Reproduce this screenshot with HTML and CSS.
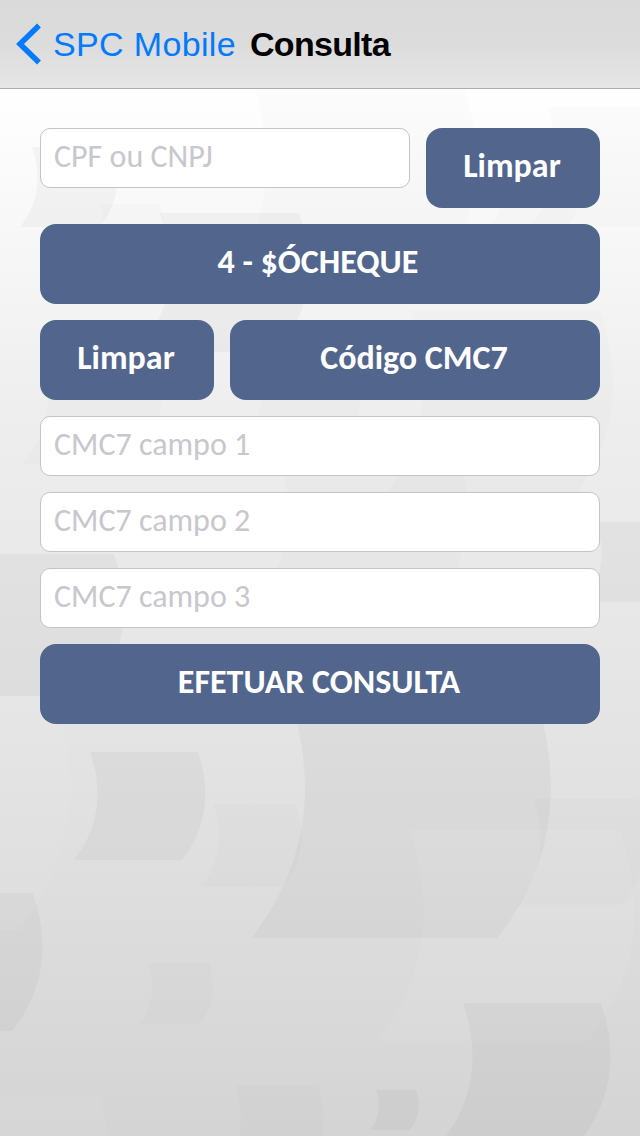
FILE: index.html
```
<!DOCTYPE html>
<html lang="pt-BR">
<head>
  <meta charset="UTF-8" />
  <meta name="viewport" content="width=device-width, initial-scale=1" />
  <title>Consulta</title>
  <link rel="stylesheet" href="styles.css">
</head>
<body>

<!-- Background pattern -->
<svg class="pattern" viewBox="0 0 640 1136" aria-hidden="true">
  <defs>
    <path id="flag" d="M0 0H100C112 35 109 70 85 100H-15C9 70 12 35 0 0Z" />
  </defs>
  <g class="dark">
    <use href="#flag" transform="translate(32 147) scale(.8)" />
    <use href="#flag" transform="translate(160 213) scale(1.39)" />
    <use href="#flag" transform="translate(-28 554) scale(1.42)" />
    <use href="#flag" transform="translate(596 522) scale(.8)" />
    <use href="#flag" transform="translate(288 692) scale(2.46)" />
    <use href="#flag" transform="translate(90 752) scale(1.08)" />
    <use href="#flag" transform="translate(-105 893) scale(1.38)" />
    <use href="#flag" transform="translate(463 1003) scale(1.38)" />
    <use href="#flag" transform="translate(376 1090) scale(.4)" />
  </g>
  <g class="faint">
    <use href="#flag" transform="translate(100 204) scale(.6)" />
    <use href="#flag" transform="translate(252 80) scale(2.1)" />
    <use href="#flag" transform="translate(547 107) scale(1.2)" />
    <use href="#flag" transform="translate(500 150) scale(.78)" />
    <use href="#flag" transform="translate(40 350) scale(1.14)" />
    <use href="#flag" transform="translate(255 350) scale(1.0)" />
    <use href="#flag" transform="translate(410 310) scale(1.9)" />
    <use href="#flag" transform="translate(275 440) scale(1.8)" />
    <use href="#flag" transform="translate(213 804) scale(.83)" />
    <use href="#flag" transform="translate(148 963) scale(.61)" />
    <use href="#flag" transform="translate(533 799) scale(1.06)" />
    <use href="#flag" transform="translate(235 1085) scale(.83)" />
  </g>
  <g class="light">
    <use href="#flag" transform="translate(-180 696) scale(2.34)" />
    <use href="#flag" transform="translate(409 830) scale(2.11)" />
    <use href="#flag" transform="translate(-51 1095) scale(1.5)" />
  </g>
</svg>

<header>
  <a class="back" href="#">
    <svg width="26" height="42" viewBox="0 0 26 42">
      <path d="M23 2.5L4 21L23 39.5" fill="none" stroke="currentColor" stroke-width="5.5" />
    </svg>
    <span>SPC Mobile</span>
  </a>
  <h1>Consulta</h1>
</header>

<main class="form">
  <div class="row">
    <input class="field" type="text" placeholder="CPF ou CNPJ">
    <button class="btn btn-small">Limpar</button>
  </div>
  <button class="btn btn-type">4 - $ÓCHEQUE</button>
  <div class="row">
    <button class="btn btn-small">Limpar</button>
    <button class="btn btn-wide">Código CMC7</button>
  </div>
  <input class="field" type="text" placeholder="CMC7 campo 1">
  <input class="field" type="text" placeholder="CMC7 campo 2">
  <input class="field" type="text" placeholder="CMC7 campo 3">
  <button class="btn">EFETUAR CONSULTA</button>
</main>

</body>
</html>
```
FILE: styles.css
```
* {
  box-sizing: border-box;
}

body {
  margin: 0;
  height: 1136px;
  position: relative;
  overflow: hidden;
  background: linear-gradient(#ffffff 88px, #f7f7f7 240px, #eeeeee 410px, #e4e4e4 730px, #dbdbdb 960px, #d4d4d4 1136px);
  font-family: Carlito, Calibri, Lato, sans-serif;
}

.pattern {
  position: absolute;
  top: 0;
  left: 0;
  width: 640px;
  height: 1136px;
  z-index: -1;
}

.dark {
  fill: rgba(0, 0, 0, 0.032);
}

.faint {
  fill: rgba(0, 0, 0, 0.013);
}

.light {
  fill: rgba(255, 255, 255, 0.06);
}

header {
  height: 89px;
  display: flex;
  align-items: center;
  gap: 14px;
  padding-left: 16px;
  background: linear-gradient(#dadada, #dcdcdc 50%, #e6e6e6);
  border-bottom: 1px solid #acacac;
  font-family: 'Liberation Sans', Arial, sans-serif;
}

.back {
  display: flex;
  align-items: center;
  gap: 11px;
  color: #007aff;
  font-size: 34px;
  letter-spacing: 0.35px;
  text-decoration: none;
}

header h1 {
  margin: 0;
  font-size: 34px;
  letter-spacing: -0.7px;
}

.form {
  display: flex;
  flex-direction: column;
  gap: 16px;
  padding: 39px 40px 0;
}

.row {
  display: flex;
  align-items: flex-start;
  gap: 16px;
}

.field {
  width: 100%;
  height: 60px;
  padding: 0 13px 4px;
  border: 1px solid #c4c4c6;
  border-radius: 10px;
  background-color: #fff;
  font-family: inherit;
  font-size: 32px;
}

.row .field {
  flex: 1;
  min-width: 0;
}

.field::placeholder {
  color: #c7c7cd;
  opacity: 1;
}

.btn {
  height: 80px;
  padding: 0 2px 5px 0;
  border: none;
  border-radius: 16px;
  background-color: #52658c;
  color: #fff;
  font-family: inherit;
  font-size: 34px;
  font-weight: 700;
}

.btn-type {
  padding-right: 4px;
}

.btn-small {
  width: 174px;
}

.btn-wide {
  flex: 1;
}
```
